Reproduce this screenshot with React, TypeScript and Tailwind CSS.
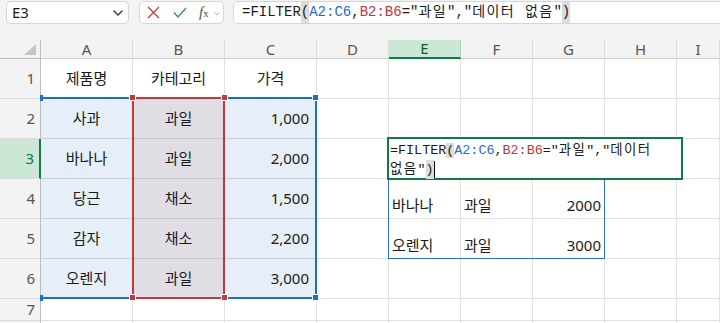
import React from "react";

const COLS = ["A", "B", "C", "D", "E", "F", "G", "H", "I"];
const colW = ["w-[92px]", "w-[92px]", "w-[92px]", "w-[72px]", "w-[72px]", "w-[72px]", "w-[72px]", "w-[72px]", "flex-1"];

type Cell = { text: string; align?: "center" | "right" | "left" };

const sheet: Record<number, Record<string, Cell>> = {
  1: { A: { text: "제품명", align: "center" }, B: { text: "카테고리", align: "center" }, C: { text: "가격", align: "center" } },
  2: { A: { text: "사과", align: "center" }, B: { text: "과일", align: "center" }, C: { text: "1,000", align: "right" } },
  3: { A: { text: "바나나", align: "center" }, B: { text: "과일", align: "center" }, C: { text: "2,000", align: "right" } },
  4: {
    A: { text: "당근", align: "center" }, B: { text: "채소", align: "center" }, C: { text: "1,500", align: "right" },
    E: { text: "바나나" }, F: { text: "과일" }, G: { text: "2000", align: "right" },
  },
  5: {
    A: { text: "감자", align: "center" }, B: { text: "채소", align: "center" }, C: { text: "2,200", align: "right" },
    E: { text: "오렌지" }, F: { text: "과일" }, G: { text: "3000", align: "right" },
  },
  6: { A: { text: "오렌지", align: "center" }, B: { text: "과일", align: "center" }, C: { text: "3,000", align: "right" } },
};

const rowH: Record<number, string> = { 1: "h-[40px]", 2: "h-[40px]", 3: "h-[40px]", 4: "h-[40px]", 5: "h-[40px]", 6: "h-[40px]", 7: "h-[22px]", 8: "h-[30px]" };

const mono = "font-[family-name:'Liberation_Mono','Noto_Sans_CJK_KR',monospace]";

// korean runs in the formula are drawn a bit wider than the mono cells
const Ko = ({ children }: { children: React.ReactNode }) => <span className="tracking-[1.4px]">{children}</span>;

function GridRow({ r }: { r: number }) {
  const selected = r === 3;
  return (
    <div className={`flex ${rowH[r]}`}>
      <div
        className={`w-[41px] shrink-0 flex items-center justify-end pr-[5px] text-[15px] border-b border-[#dcdcdc] ${
          selected ? "bg-[#cbe7d6] text-[#107c41] border-r-2 border-r-[#107c41]" : "bg-[#f3f3f3] text-[#555] border-r border-r-[#bdbdbd]"
        }`}
      >
        {r < 8 ? r : ""}
      </div>
      {COLS.map((c, i) => {
        const cell = sheet[r]?.[c];
        const inRange = r >= 2 && r <= 6 && (c === "A" || c === "C");
        const inCat = r >= 2 && r <= 6 && c === "B";
        const spill = (r === 4 || r === 5) && (c === "E" || c === "F" || c === "G");
        let cls = "border-r border-b border-[#e1e1e1] bg-white";
        if (inRange) cls = "border-r border-b border-[#e1e1e1] border-b-[#c9ced6] bg-[#e6eff8]";
        if (inCat) cls = "border-r border-b border-[#e1e1e1] border-b-[#c8c4cb] bg-[#e1dde4]";
        const just = cell?.align === "center" ? "justify-center" : cell?.align === "right" ? "justify-end" : "justify-start";
        return (
          <div
            key={c}
            className={`${colW[i]} shrink-0 flex ${spill ? "items-end pb-[2px] px-[3px]" : "items-center px-[7px]"} ${just} ${cls} text-[15px] text-[#1a1a1a]`}
          >
            {cell?.text}
          </div>
        );
      })}
    </div>
  );
}

export default function App() {
  return (
    <div className="relative w-[720px] h-[323px] overflow-hidden bg-white font-[family-name:'Noto_Sans','Noto_Sans_CJK_KR',sans-serif]">
      {/* formula bar */}
      <div className="h-[40px] bg-[#f3f3f3] flex items-start pt-[1px] pl-[6px]">
        <div className="w-[123px] h-[23px] bg-white border border-[#d6d6d6] rounded-[5px] flex items-center justify-between pl-[5px] pr-[4px]">
          <span className="text-[15px] text-[#1a1a1a]">E3</span>
          <svg width="12" height="8" viewBox="0 0 12 8"><path d="M1.5 1.5 6 6l4.5-4.5" fill="none" stroke="#333" strokeWidth="1.3" /></svg>
        </div>
        <div className="ml-[10px] w-[85px] h-[23px] bg-white border border-[#d6d6d6] rounded-[5px] flex items-center pl-[7px]">
          <svg width="13" height="13" viewBox="0 0 13 13"><path d="M1 1l11 11M12 1 1 12" stroke="#d13438" strokeWidth="1.3" /></svg>
          <svg className="ml-[13px]" width="14" height="11" viewBox="0 0 14 11"><path d="M1 5.5l4 4.5L13 1" fill="none" stroke="#2e9a4e" strokeWidth="1.3" /></svg>
          <span className="ml-[12px] text-[15px] italic text-[#555] font-[family-name:'Liberation_Serif',serif] leading-none">
            f<span className="text-[11px] not-italic">x</span>
          </span>
          <svg className="ml-[5px] mt-[2px]" width="6" height="4" viewBox="0 0 6 4"><path d="M.5.5 3 3 5.5.5" fill="none" stroke="#aaa" strokeWidth="0.9" /></svg>
        </div>
        <div className={`ml-[9px] flex-1 -mr-[4px] h-[23px] bg-white border border-[#d6d6d6] rounded-[5px] flex items-center pl-[8px] text-[14px] text-[#1a1a1a] ${mono} whitespace-pre`}>
          =FILTER<span className="bg-[#dcdcdc]">(</span>
          <span className="text-[#1f6fc4]">A2:C6</span>,<span className="text-[#c0353a]">B2:B6</span>="<Ko>과일</Ko>","<Ko>데이터 없음</Ko>"
          <span className="bg-[#dcdcdc]">)</span>
        </div>
      </div>

      {/* column headers */}
      <div className="flex h-[19px]">
        <div className="w-[41px] shrink-0 bg-[#f3f3f3] border-r border-b border-[#bdbdbd] flex items-end justify-end pr-[4px] pb-[3px]">
          <svg width="12" height="11" viewBox="0 0 12 11"><path d="M12 0V11H0Z" fill="#c4c4c4" /></svg>
        </div>
        {COLS.map((c, i) =>
          c === "E" ? (
            <div key={c} className={`${colW[i]} shrink-0 bg-[#cbe7d6] border-r border-[#a8d5b8] border-b-2 border-b-[#107c41] flex items-center justify-center text-[15px] text-[#0f5d31]`}>
              {c}
            </div>
          ) : (
            <div key={c} className={`${colW[i]} shrink-0 bg-[#f3f3f3] border-r border-b border-[#dcdcdc] border-b-[#d0d0d0] flex items-center justify-center text-[15px] text-[#555]`}>
              {c}
            </div>
          )
        )}
      </div>

      {[1, 2, 3, 4, 5, 6, 7, 8].map((r) => (
        <GridRow key={r} r={r} />
      ))}

      {/* referenced ranges */}
      <div className="absolute left-[41px] top-[97px] w-[276px] h-[202px] border-2 border-l-0 border-[#1d6fc1]" />
      <div className="absolute left-[132px] top-[97px] w-[93px] h-[202px] border-2 border-[#c1393c]" />
      <div className="absolute left-[40px] top-[95px] w-[3px] h-[6px] bg-[#1d6fc1]" />
      <div className="absolute left-[40px] top-[295px] w-[3px] h-[6px] bg-[#1d6fc1]" />
      <div className="absolute left-[129px] top-[94px] w-[7px] h-[7px] bg-[#c1393c] border border-white" />
      <div className="absolute left-[221px] top-[94px] w-[7px] h-[7px] bg-[#c1393c] border border-white" />
      <div className="absolute left-[312px] top-[94px] w-[7px] h-[7px] bg-[#1d6fc1] border border-white" />
      <div className="absolute left-[129px] top-[294px] w-[7px] h-[7px] bg-[#c1393c] border border-white" />
      <div className="absolute left-[221px] top-[294px] w-[7px] h-[7px] bg-[#c1393c] border border-white" />
      <div className="absolute left-[312px] top-[294px] w-[7px] h-[7px] bg-[#1d6fc1] border border-white" />

      {/* spill range */}
      <div className="absolute left-[388px] top-[178px] w-[217px] h-[81px] border border-[#2b6fd0]" />

      {/* in-cell editor */}
      <div className={`absolute left-[387px] top-[137px] w-[296px] h-[43px] bg-white border-2 border-[#107c41] pl-[1px] pt-[2px] text-[13.4px] leading-[19px] text-[#1a1a1a] ${mono}`}>
        <div className="whitespace-pre">
          =FILTER<span className="bg-[#dcdcdc]">(</span><span className="text-[#1f6fc4]">A2:C6</span>,<span className="text-[#c0353a]">B2:B6</span>="<Ko>과일</Ko>","<Ko>데이터</Ko>
        </div>
        <div className="whitespace-pre flex items-center">
          <Ko>없음</Ko>"<span className="bg-[#dcdcdc]">)</span>
          <span className="inline-block w-px h-[17px] bg-black" />
        </div>
      </div>
    </div>
  );
}
